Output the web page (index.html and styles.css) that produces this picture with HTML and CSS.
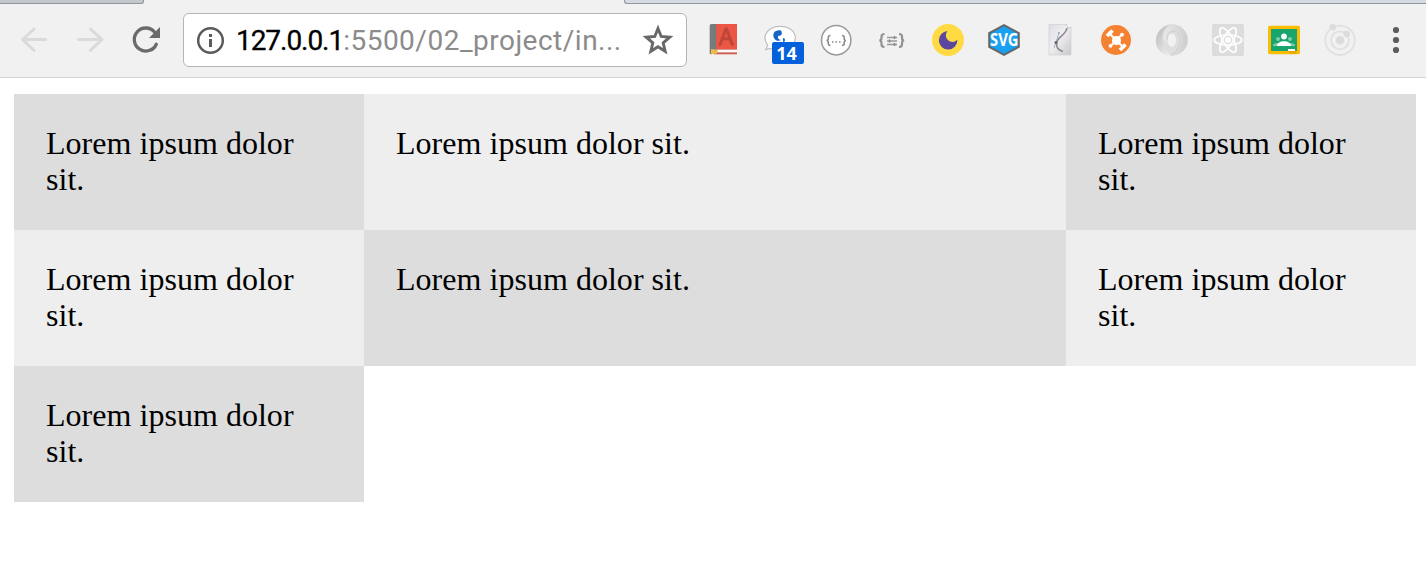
FILE: index.html
```html
<!DOCTYPE html>
<html lang="en">
<head>
<meta charset="utf-8">
<title>Grid layout</title>
<link rel="stylesheet" href="styles.css">
</head>
<body>
<header class="browser">
  <div class="tabs"><div class="tab tab-left"></div><div class="tab tab-right"></div></div>
  <div class="toolbar">
    <nav class="nav">
      <svg class="icon" viewBox="0 0 32 32"><path d="M16 5.200 4.500 15.500 16 26.300M5 15.500H27.500" fill="none" stroke="#dadada" stroke-width="3" stroke-linecap="round" stroke-linejoin="round"/></svg>
      <svg class="icon" viewBox="0 0 32 32"><path d="M16.500 5.200 28 15.500 16.500 26.300M4.500 15.500H27.500" fill="none" stroke="#dadada" stroke-width="3" stroke-linecap="round" stroke-linejoin="round"/></svg>
      <svg class="icon" viewBox="0 0 32 32"><path d="M24.700 8.200A11.500 11.500 0 1 0 26.300 20.200" fill="none" stroke="#6a6a6a" stroke-width="3.300" stroke-linecap="round"/><path d="M30 3v11H19z" fill="#6a6a6a"/></svg>
    </nav>
    <div class="omnibox">
      <svg class="info" viewBox="0 0 28 28"><circle cx="14.500" cy="14.500" r="12.300" fill="none" stroke="#5a5a5a" stroke-width="2.500"/><path d="M13 8h3v3h-3zM13 13h3v8h-3z" fill="#5a5a5a"/></svg>
      <span class="url"><span class="host">127.0.0.1</span>:5500/02_project/in...</span>
      <svg class="star" viewBox="0 0 32 32"><path d="m16 4.500 3.200 8 8.600.7-6.600 5.600 2 8.500-7.200-4.500-7.200 4.500 2-8.500-6.600-5.600 8.600-.7z" fill="none" stroke="#686868" stroke-width="2.900"/></svg>
    </div>
    <div class="extensions">
      <svg class="icon" viewBox="0 0 32 32"><path d="M3 0h26v30H3z" fill="#d7d7d7"/><path d="M8 0h21v25.500H8z" fill="#eb5744"/><path d="M1.700 1Q2 0 4 0h4.300v26L4 30H1.700z" fill="#777b7c"/><path d="M8 26h21v2H8z" fill="#f8f8f8"/><path d="M6 28.500h23v1.800H6z" fill="#d35a4d"/><path d="m3 25 7 1-2 5-2-2-3 2z" fill="#edbe45"/><text class="book-letter" x="18" y="20.500" text-anchor="middle">A</text></svg>
      <div class="badged">
        <svg class="icon" viewBox="0 0 32 32"><path d="M16 2.300c9 0 15.300 5 15.300 11.700S25 25.500 16 25.500L5 24.500 1.300 26q2.500-2.500 2-5.500C-3 11 5 2.300 16 2.300z" fill="#fff" stroke="#bdbdbd" stroke-width="1.200"/><path d="M17 6.500c-6-1-9 3-7 7.500 1.500 3 5 3.500 7 2-3-.5-4-3-2-4.500 2 1 4-1.500 2-5zM19 14a2 2 0 1 1 .1 4z" fill="#1764c8"/></svg>
        <span class="badge">14</span>
      </div>
      <svg class="icon" viewBox="0 0 32 32"><circle cx="16.200" cy="16.200" r="14.700" fill="#fff" stroke="#999" stroke-width="1.500"/><path d="M10.500 11.500q-2.200 0-2.200 2v1q0 2-1.800 2 1.800 0 1.800 2v1q0 2 2.200 2M22 11.500q2.200 0 2.200 2v1q0 2 1.800 2-1.800 0-1.800 2v1q0 2-2.200 2" fill="none" stroke="#888" stroke-width="1.500"/><path d="M12 18h1.500M15.500 18H17M19 18h1.500" stroke="#888" stroke-width="1.300"/></svg>
      <svg class="icon" viewBox="0 0 32 32"><path d="M8.500 10q-3 0-3 2.500V14q0 2.500-2.200 2.500 2.200 0 2.200 2.500v1.500q0 2.500 3 2.500M23 10q3 0 3 2.500V14q0 2.500 2.200 2.500-2.200 0-2.200 2.500v1.500q0 2.500-3 2.500" fill="none" stroke="#929292" stroke-width="2.200"/><path d="M11 13.500h10M11 17h10M11 20.500h10" stroke="#999" stroke-width="1.400"/><path d="M18.500 12v3M13.500 15.500v3M18.500 19v3" stroke="#888" stroke-width="1.500"/></svg>
      <svg class="icon" viewBox="0 0 32 32"><circle cx="16" cy="16" r="16" fill="#ffda43"/><path d="M15.500 7A9.300 9.300 0 1 0 25.400 15.800 6 6 0 1 1 15.500 7z" fill="#5b46a0"/></svg>
      <svg class="icon" viewBox="0 0 32 32"><path d="M16 1.200 30.800 9v14L16 30.800 1.200 23V9z" fill="#19a0f0" stroke="#666" stroke-width="2"/><text class="svg-letters" x="2" y="22" textLength="28.500" lengthAdjust="spacingAndGlyphs">SVG</text></svg>
      <svg class="icon" viewBox="0 0 32 32"><defs><linearGradient id="paper" x2="1" y2="1"><stop stop-color="#dedde2"/><stop offset=".45" stop-color="#efeef1"/><stop offset="1" stop-color="#c8c7cc"/></linearGradient></defs><path d="M5 .5h17.500l4.500 4v26.500H5z" fill="url(#paper)" stroke="#d0d0d3" stroke-width=".7"/><path d="M22 .5 24 4l3.500-.8" fill="#f9f9fa" stroke="#aaa" stroke-width=".6"/><path d="M23 4c-1 7-10 9-10.500 15-.4 5 3 7.500 6.500 8.500" fill="none" stroke="#918a90" stroke-width="1.700"/><path d="m15 9-5 15" stroke="#8ba8b8" stroke-width=".8"/><circle cx="12" cy="18.500" r="1.500" fill="#66606b"/><circle cx="15" cy="9" r="1" fill="#8ba8b8"/></svg>
      <svg class="icon" viewBox="0 0 32 32"><circle cx="16" cy="16" r="15" fill="#f58230"/><circle cx="16.500" cy="16.500" r="4.500" fill="#fff"/><path d="m10.500 10.500 12 12M21.500 11l-11 11" stroke="#fff" stroke-width="2"/><path d="m7 12 5.500-5.500M20 26l5.500-5.500" stroke="#fff" stroke-width="3.800"/><circle cx="22" cy="10.700" r="1.900" fill="#fff"/><circle cx="10.500" cy="21.800" r="1.900" fill="#fff"/></svg>
      <svg class="icon" viewBox="0 0 32 32"><defs><linearGradient id="swirlA" x2=".8" y2="1"><stop stop-color="#b8b8b8"/><stop offset="1" stop-color="#eee"/></linearGradient><linearGradient id="swirlB" x2="1" y2="0"><stop stop-color="#e8e8e8"/><stop offset="1" stop-color="#cdcdcd"/></linearGradient></defs><circle cx="16" cy="16" r="15.700" fill="#dedede"/><path d="M17 .2C4 4 2.500 20 15 31.700-5 31-6 2 17 .2z" fill="url(#swirlA)"/><path d="M15 31.800C27 28 29.500 10 21 7 14 5 9 11 11 20 4 12 8 2 17 .2 36 2 38 30 15 31.800z" fill="url(#swirlB)"/><path d="M11.500 16C10 6 21 4 23.500 12 26 21 21 28 15 31.500" fill="none" stroke="#d0d0d0" stroke-width="1.200"/><ellipse cx="15.800" cy="16.300" rx="4.200" ry="6.800" fill="#f1f1f1"/></svg>
      <svg class="icon" viewBox="0 0 32 32"><rect width="32" height="32" rx="2" fill="#dcdcdc"/><g fill="none" stroke="#fff" stroke-width="1.700"><ellipse cx="16" cy="16" rx="13.800" ry="5"/><ellipse cx="16" cy="16" rx="13.800" ry="5" transform="rotate(60 16 16)"/><ellipse cx="16" cy="16" rx="13.800" ry="5" transform="rotate(120 16 16)"/></g><circle cx="16" cy="16" r="3" fill="#fff"/></svg>
      <svg class="icon" viewBox="0 0 32 32"><rect y="1.700" width="32" height="28.500" rx="1.800" fill="#fbbc05"/><path d="M3 5h26v22H3z" fill="#18a56c"/><g fill="#83cbae"><circle cx="10" cy="15" r="2"/><circle cx="22" cy="15" r="2"/><path d="M5 22q0-3 5-3h12q5 0 5 3z"/></g><circle cx="16" cy="12.500" r="2.900" fill="#fff"/><path d="M9 22c0-3 3-4.800 7-4.800s7 1.800 7 4.800z" fill="#fff"/><path d="M20 25h7v2h-7z" fill="#fff"/><path d="M20 27h7l2 2.500h-7z" fill="#e8a600"/></svg>
      <svg class="icon" viewBox="0 0 32 32"><g fill="none" stroke="#e0e0e0" stroke-width="1.800"><circle cx="16" cy="16.300" r="14.700"/><circle cx="16" cy="16.300" r="9"/></g><g fill="#dcdcdc"><circle cx="16" cy="16.300" r="4.300"/><circle cx="8.700" cy="3.300" r="3.300"/><circle cx="22.700" cy="10" r="3.300"/></g></svg>
      <svg class="icon" viewBox="0 0 32 32"><g fill="#5d5d5d"><circle cx="16" cy="6" r="3.100"/><circle cx="16" cy="16" r="3.100"/><circle cx="16" cy="26" r="3.100"/></g></svg>
    </div>
  </div>
</header>
<main class="grid">
  <div class="cell">Lorem ipsum dolor sit.</div>
  <div class="cell">Lorem ipsum dolor sit.</div>
  <div class="cell">Lorem ipsum dolor sit.</div>
  <div class="cell">Lorem ipsum dolor sit.</div>
  <div class="cell">Lorem ipsum dolor sit.</div>
  <div class="cell">Lorem ipsum dolor sit.</div>
  <div class="cell">Lorem ipsum dolor sit.</div>
</main>
</body>
</html>
```
FILE: styles.css
```css
* { box-sizing: border-box; }
body { margin: 0; background: #fff; overflow: hidden; }
.browser { height: 78px; background: #f1f1f1; border-bottom: 1px solid #d2d2d2; }
.tabs { display: flex; justify-content: space-between; height: 4px; }
.tab { border-bottom: 1px solid #92979c; }
.tab-left { width: 144px; background: #c2c8ce; border-right: 1px solid #92979c; border-bottom-right-radius: 3px; }
.tab-right { width: 802px; background: #d5dbe2; border-left: 1px solid #92979c; border-bottom-left-radius: 3px; }
.toolbar { display: flex; align-items: center; height: 72px; padding-left: 18px; }
.nav, .extensions { display: flex; align-items: center; gap: 24px; }
.nav { width: 165px; }
.icon { display: block; flex: none; width: 32px; height: 32px; overflow: visible; }
.omnibox { display: flex; align-items: center; width: 504px; height: 54px; margin-right: 21px; padding: 0 12px; background: #fff; border: 1px solid #b5b5b5; border-radius: 6px; }
.info { flex: none; width: 28px; height: 28px; overflow: visible; }
.url { flex: 1; padding: 2px 0 0 12px; font: 28px/34px Roboto, sans-serif; letter-spacing: .5px; white-space: nowrap; color: #8b8b8b; }
.host { color: #000; letter-spacing: -1.05px; -webkit-text-stroke: .3px #000; }
.star { flex: none; width: 32px; height: 32px; }
.badged { position: relative; }
.badge { position: absolute; left: 8px; top: 18px; width: 32px; height: 22px; padding-right: 3px; border-radius: 2px; background: #0560dc; color: #fff; font: bold 18px/23px "Open Sans", sans-serif; text-align: center; }
.book-letter { font: 23px "Open Sans", sans-serif; fill: #bd4638; stroke: #bd4638; stroke-width: 1px; }
.svg-letters { font: bold 17px "Open Sans", sans-serif; fill: #fff; }
.grid { display: grid; grid-template-columns: 350px 702px 350px; grid-auto-rows: 136px; padding: 16px 10px 0 14px; }
.cell { padding: 31px 32px 33px; background: #eee; font: 32px/36px "Liberation Serif", serif; letter-spacing: .03px; color: #000; }
.cell:nth-child(odd) { background: #ddd; }
```
